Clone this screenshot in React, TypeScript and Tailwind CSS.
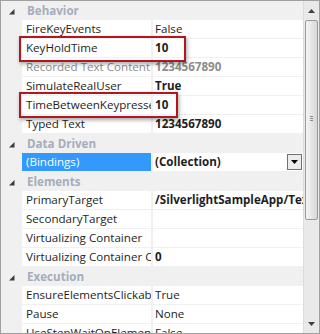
import React from "react";

type Row =
  | { kind: "header"; label: string }
  | {
      kind: "prop";
      name: string;
      value: string;
      bold?: boolean;
      muted?: boolean;
      selected?: boolean;
      dropdown?: boolean;
    };

const rows: Row[] = [
  { kind: "header", label: "Behavior" },
  { kind: "prop", name: "FireKeyEvents", value: "False" },
  { kind: "prop", name: "KeyHoldTime", value: "10", bold: true },
  { kind: "prop", name: "Recorded Text Content", value: "1234567890", bold: true, muted: true },
  { kind: "prop", name: "SimulateRealUser", value: "True", bold: true },
  { kind: "prop", name: "TimeBetweenKeypresses", value: "10", bold: true },
  { kind: "prop", name: "Typed Text", value: "1234567890", bold: true },
  { kind: "header", label: "Data Driven" },
  { kind: "prop", name: "(Bindings)", value: "(Collection)", bold: true, selected: true, dropdown: true },
  { kind: "header", label: "Elements" },
  { kind: "prop", name: "PrimaryTarget", value: "/SilverlightSampleApp/TextBox", bold: true },
  { kind: "prop", name: "SecondaryTarget", value: "" },
  { kind: "prop", name: "Virtualizing Container", value: "" },
  { kind: "prop", name: "Virtualizing Container Count", value: "0", bold: true },
  { kind: "header", label: "Execution" },
  { kind: "prop", name: "EnsureElementsClickable", value: "True" },
  { kind: "prop", name: "Pause", value: "None" },
  { kind: "prop", name: "UseStepWaitOnElement", value: "False" },
];

function Triangle() {
  return (
    <svg width="22" height="19" viewBox="0 0 22 19" className="shrink-0">
      <polygon points="13.5,8 13.5,13.5 8,13.5" fill="#3c3c3c" />
    </svg>
  );
}

export default function App() {
  return (
    <div
      className="relative w-[320px] h-[334px] overflow-hidden bg-[#f0f0f0] border border-[#a0a0a0] text-[11.6px] text-[#1e1e1e]"
      style={{ fontFamily: '"Open Sans", "Noto Sans", sans-serif' }}
    >
      <div className="flex h-full">
        <div className="flex flex-col w-[302px] shrink-0">
          {rows.map((r, i) =>
            r.kind === "header" ? (
              <div key={i} className="flex items-center h-[19px] shrink-0 bg-[#f0f0f0]">
                <Triangle />
                <span className="pl-[4px] font-bold text-[#a5adbd] leading-[19px]">{r.label}</span>
              </div>
            ) : (
              <div key={i} className="flex h-[19px] shrink-0 bg-[#f0f0f0]">
                <div className="w-[21px] shrink-0" />
                <div
                  className={
                    "w-[129px] shrink-0 h-[18px] pl-[4px] whitespace-nowrap overflow-hidden leading-[18px] " +
                    (r.selected ? "bg-[#3399ff] text-white" : "bg-white") +
                    (r.muted ? " text-[#8c8c8c]" : "")
                  }
                >
                  {r.name}
                </div>
                <div
                  className={
                    "ml-[2px] flex-1 min-w-0 h-[18px] bg-white pl-[2px] whitespace-nowrap overflow-hidden leading-[18px] flex items-center " +
                    (r.bold ? "font-bold " : "") +
                    (r.muted ? "text-[#8c8c8c]" : "")
                  }
                >
                  <span className="flex-1 min-w-0 overflow-hidden">{r.value}</span>
                  {r.dropdown && (
                    <div className="mr-[1px] w-[15px] h-[16px] border border-[#707070] bg-[#ececec] flex items-center justify-center shrink-0">
                      <svg width="7" height="4" viewBox="0 0 7 4">
                        <polygon points="0,0 7,0 3.5,4" fill="#000" />
                      </svg>
                    </div>
                  )}
                </div>
              </div>
            )
          )}
        </div>
        <div className="relative flex-1 bg-[#e9e9e9] border-l border-[#dcdcdc]">
          <div className="flex justify-center pt-[8px]">
            <svg width="7" height="4" viewBox="0 0 7 4">
              <polygon points="3.5,0 7,4 0,4" fill="#404040" />
            </svg>
          </div>
          <div className="absolute left-[1px] right-[1px] top-[19px] h-[200px] rounded-[2px] border border-[#9a9a9a] bg-gradient-to-r from-[#f4f4f4] via-[#e6e6e6] to-[#d6d6d6]">
            <div className="absolute left-[4px] right-[4px] top-[95px] flex flex-col gap-[1px]">
              <div className="h-[1px] bg-[#8a8a8a]" />
              <div className="h-[1px] bg-[#8a8a8a]" />
              <div className="h-[1px] bg-[#8a8a8a]" />
            </div>
          </div>
          <div className="absolute bottom-[7px] left-0 right-0 flex justify-center">
            <svg width="7" height="4" viewBox="0 0 7 4">
              <polygon points="0,0 7,0 3.5,4" fill="#404040" />
            </svg>
          </div>
        </div>
      </div>
      <div className="absolute left-[18px] top-[35px] w-[167px] h-[26px] border-2 border-[#b3171d] shadow-[1px_2px_4px_rgba(0,0,0,0.35)]" />
      <div className="absolute left-[18px] top-[91px] w-[159px] h-[26px] border-2 border-[#b3171d] shadow-[1px_2px_4px_rgba(0,0,0,0.35)]" />
    </div>
  );
}
